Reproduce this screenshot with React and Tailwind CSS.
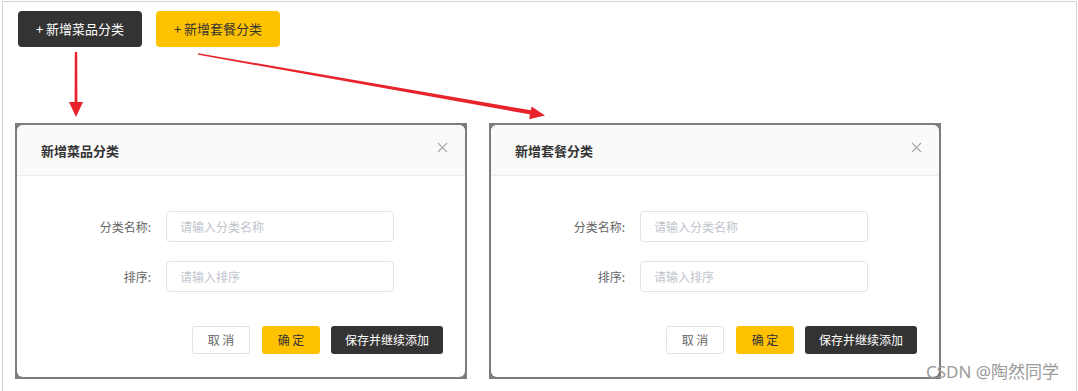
import React from "react";

function Dialog({ title }) {
  return (
    <div className="w-[452px] h-[256px] bg-[#7d7d7d] p-[2px] shrink-0">
      <div className="h-full bg-white rounded-[6px] overflow-hidden flex flex-col">
        <div className="h-[51px] bg-[#fafaf9] border-b border-[#ebebeb] flex items-center justify-between pl-[24px] pr-[17px] shrink-0">
          <span className="text-[13px] font-bold text-[#333] leading-none">{title}</span>
          <svg width="11" height="11" viewBox="0 0 11 11" className="mb-[6px]">
            <path d="M1 1 L10 10 M10 1 L1 10" stroke="#a8a8a8" strokeWidth="1.1" fill="none" />
          </svg>
        </div>
        <div className="pt-[35px] flex flex-col">
          <div className="flex items-center">
            <div className="w-[134px] text-right text-[12px] text-[#666] leading-none">分类名称:</div>
            <input
              className="ml-[15px] w-[228px] h-[31px] border border-[#e1e3e8] rounded-[4px] pl-[13px] text-[12px] outline-none placeholder:text-[#c0c4cc]"
              placeholder="请输入分类名称"
            />
          </div>
          <div className="flex items-center mt-[19px]">
            <div className="w-[134px] text-right text-[12px] text-[#666] leading-none">排序:</div>
            <input
              className="ml-[15px] w-[228px] h-[31px] border border-[#e1e3e8] rounded-[4px] pl-[13px] text-[12px] outline-none placeholder:text-[#c0c4cc]"
              placeholder="请输入排序"
            />
          </div>
          <div className="mt-[34px] flex justify-end pr-[22px]">
            <div className="w-[58px] h-[28px] border border-[#e1e3e8] rounded-[3px] flex items-center justify-center text-[12px] text-[#666]">取 消</div>
            <div className="ml-[12px] w-[58px] h-[28px] bg-[#ffc200] rounded-[3px] flex items-center justify-center text-[12px] text-[#333]">确 定</div>
            <div className="ml-[11px] w-[112px] h-[28px] bg-[#333] rounded-[3px] flex items-center justify-center text-[12px] text-white">保存并继续添加</div>
          </div>
        </div>
      </div>
    </div>
  );
}

export default function App() {
  return (
    <div className="relative w-[1078px] h-[391px] bg-white overflow-hidden font-['Noto_Sans_CJK_SC','Noto_Sans',sans-serif]">
      <div className="ml-[2px] mt-[1px] w-[1075px] h-[420px] border-l border-t border-r border-[#d4d4d4] pl-[12px] pt-[9px]">
        <div className="flex gap-[14px] pl-[3px]">
          <div className="w-[124px] h-[36px] rounded-[4px] bg-[#333] text-white text-[13px] flex items-center justify-center">+ 新增菜品分类</div>
          <div className="w-[124px] h-[36px] rounded-[4px] bg-[#ffc200] text-[#333] text-[13px] flex items-center justify-center">+ 新增套餐分类</div>
        </div>
        <div className="mt-[76px] flex gap-[22px]">
          <Dialog title="新增菜品分类" />
          <Dialog title="新增套餐分类" />
        </div>
      </div>

      <svg className="absolute inset-0 pointer-events-none" width="1078" height="391" viewBox="0 0 1078 391">
        <polygon points="74.8,52 77.2,52 77.4,103 76,103 74.6,103" fill="#e8232b" />
        <polygon points="69,102 83,102 76,117" fill="#e8232b" />
        <polygon points="198,53.2 198.2,54.8 532,114.8 532.6,110.6" fill="#e8232b" />
        <polygon points="545,115.5 529,119.2 531.6,106.6" fill="#e8232b" />
      </svg>

      <div className="absolute left-[926px] top-[361px] text-[17px] text-[#9a9a9a] leading-[22px] font-['Noto_Sans','Noto_Sans_CJK_SC',sans-serif]">
        CSDN @陶然同学
      </div>
    </div>
  );
}
